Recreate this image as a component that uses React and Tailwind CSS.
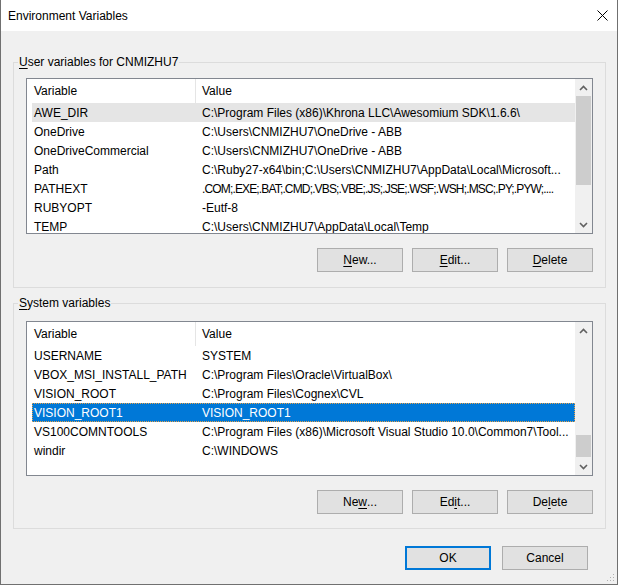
import React from "react";

const userVars = [
  ["AWE_DIR", "C:\\Program Files (x86)\\Khrona LLC\\Awesomium SDK\\1.6.6\\"],
  ["OneDrive", "C:\\Users\\CNMIZHU7\\OneDrive - ABB"],
  ["OneDriveCommercial", "C:\\Users\\CNMIZHU7\\OneDrive - ABB"],
  ["Path", "C:\\Ruby27-x64\\bin;C:\\Users\\CNMIZHU7\\AppData\\Local\\Microsoft..."],
  ["PATHEXT", ".COM;.EXE;.BAT;.CMD;.VBS;.VBE;.JS;.JSE;.WSF;.WSH;.MSC;.PY;.PYW;....", "tracking-[-0.85px]"],
  ["RUBYOPT", "-Eutf-8"],
  ["TEMP", "C:\\Users\\CNMIZHU7\\AppData\\Local\\Temp"],
];

const systemVars = [
  ["USERNAME", "SYSTEM"],
  ["VBOX_MSI_INSTALL_PATH", "C:\\Program Files\\Oracle\\VirtualBox\\"],
  ["VISION_ROOT", "C:\\Program Files\\Cognex\\CVL"],
  ["VISION_ROOT1", "VISION_ROOT1"],
  ["VS100COMNTOOLS", "C:\\Program Files (x86)\\Microsoft Visual Studio 10.0\\Common7\\Tool..."],
  ["windir", "C:\\WINDOWS"],
];

const Chevron = ({ up }) => (
  <svg width="9" height="6" viewBox="0 0 9 6">
    <path
      d={up ? "M1 5 L4.5 1.5 L8 5" : "M1 1 L4.5 4.5 L8 1"}
      fill="none"
      stroke="#606060"
      strokeWidth="1.6"
    />
  </svg>
);

const Scrollbar = ({ thumbTop, thumbHeight }) => (
  <div className="w-[17px] shrink-0 bg-[#f0f0f0] flex flex-col">
    <div className="h-[17px] flex items-center justify-center">
      <Chevron up />
    </div>
    <div className="flex-1 flex flex-col">
      <div style={{ height: thumbTop }} />
      <div className="bg-[#cdcdcd] mx-[1px]" style={{ height: thumbHeight }} />
    </div>
    <div className="h-[17px] flex items-center justify-center">
      <Chevron />
    </div>
  </div>
);

const VarList = ({ rows, hoverIndex, selectedIndex, height, thumbTop, thumbHeight }) => (
  <div className="flex border border-[#828790] bg-white overflow-hidden" style={{ height }}>
    <div className="flex-1 min-w-0 overflow-hidden flex flex-col pl-[5px]">
      <div className="h-[24px] flex items-center shrink-0">
        <div className="w-[164px] shrink-0 h-full flex items-center pl-[2px] border-r border-[#e5e5e5]">Variable</div>
        <div className="pl-[6px]">Value</div>
      </div>
      {rows.map(([name, value, tight], i) => (
        <div
          key={name}
          className={`h-[19px] shrink-0 flex items-center whitespace-nowrap overflow-hidden ${
            i === selectedIndex
              ? "bg-[#0078d7] text-white outline outline-1 outline-dotted outline-[#e8a24a] -outline-offset-1"
              : i === hoverIndex
              ? "bg-[#e5e5e5]"
              : ""
          }`}
        >
          <div className="w-[164px] shrink-0 pl-[2px]">{name}</div>
          <div className={`pl-[6px] ${tight || ""}`}>{value}</div>
        </div>
      ))}
    </div>
    <Scrollbar thumbTop={thumbTop} thumbHeight={thumbHeight} />
  </div>
);

const Button = ({ children, primary }) => (
  <button
    className={`h-[24px] w-[86px] bg-[#e1e1e1] text-black flex items-center justify-center ${
      primary ? "border-2 border-[#0078d7]" : "border border-[#adadad]"
    }`}
  >
    {children}
  </button>
);

const U = ({ children }) => <span className="underline underline-offset-2">{children}</span>;

export default function App() {
  return (
    <div
      className="w-[618px] h-[585px] bg-[#f0f0f0] border-x border-b border-[#707070] flex flex-col text-[12px] text-black relative"
      style={{ fontFamily: '"Liberation Sans", Arial, sans-serif' }}
    >
      {/* title bar */}
      <div className="h-[31px] bg-white flex items-center justify-between pl-[7px] pr-[9px] shrink-0">
        <span>Environment Variables</span>
        <svg width="11" height="11" viewBox="0 0 11 11">
          <path d="M0.5 0.5 L10.5 10.5 M10.5 0.5 L0.5 10.5" stroke="#000" strokeWidth="1" />
        </svg>
      </div>

      <div className="flex flex-col pl-[12px] pr-[11px]">
        <fieldset className="min-w-0 border border-[#dcdcdc] mt-[23px] px-[12px] pt-[8px] pb-[15px]">
          <legend className="-ml-[8px] px-[1px] leading-[16px]">
            <U>U</U>ser variables for CNMIZHU7
          </legend>
          <VarList rows={userVars} hoverIndex={0} height={156} thumbTop={0} thumbHeight={89} />
          <div className="flex justify-end gap-[9px] mt-[14px]">
            <Button>
              <U>N</U>ew...
            </Button>
            <Button>
              <U>E</U>dit...
            </Button>
            <Button>
              <U>D</U>elete
            </Button>
          </div>
        </fieldset>

        <fieldset className="min-w-0 border border-[#dcdcdc] mt-[7px] px-[12px] pt-[10px] pb-[14px]">
          <legend className="-ml-[8px] px-[1px] leading-[16px]">
            <U>S</U>ystem variables
          </legend>
          <VarList rows={systemVars} selectedIndex={3} height={155} thumbTop={96} thumbHeight={22} />
          <div className="flex justify-end gap-[9px] mt-[14px]">
            <Button>
              Ne<U>w</U>...
            </Button>
            <Button>
              Ed<U>i</U>t...
            </Button>
            <Button>
              De<U>l</U>ete
            </Button>
          </div>
        </fieldset>
      </div>

      <div className="flex justify-end gap-[11px] mt-[17px] pr-[29px]">
        <Button primary>OK</Button>
        <Button>Cancel</Button>
      </div>

      {/* size grip */}
      <svg className="absolute right-[2px] bottom-[2px]" width="10" height="10" viewBox="0 0 10 10">
        <g fill="#b0b0b0">
          <rect x="8" y="2" width="1" height="1" />
          <rect x="5" y="5" width="1" height="1" />
          <rect x="8" y="5" width="1" height="1" />
          <rect x="2" y="8" width="1" height="1" />
          <rect x="5" y="8" width="1" height="1" />
          <rect x="8" y="8" width="1" height="1" />
        </g>
      </svg>
    </div>
  );
}
